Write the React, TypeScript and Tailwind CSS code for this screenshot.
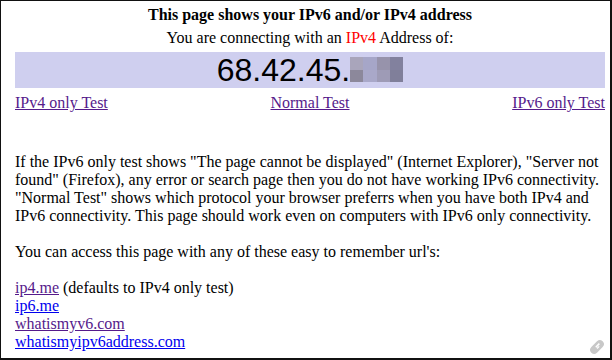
export default function App() {
  const blocks = [
    "#a9a5bb",
    "#a6a6c8",
    "#9793ab",
    "#82819e",
    "#8c889b",
    "#a9a8c9",
    "#9e9bb6",
    "#807f9a",
  ];

  return (
    <div className="relative w-[612px] h-[360px] overflow-hidden bg-white border-t border-l border-r-2 border-b-2 border-[#111] text-black font-['Liberation_Serif','Times_New_Roman',serif] text-[16px] leading-[18px]">
      <div className="pl-[14px] pr-[5px] pt-[5px]">
        <div className="text-center font-bold">This page shows your IPv6 and/or IPv4 address</div>
        <div className="mt-[5px] text-center">
          You are connecting with an <span className="text-[#ff0000]">IPv4</span> Address of:
        </div>

        <div className="mt-[5px] h-[36px] bg-[#cfcfef] flex justify-center">
          <span className="font-['Liberation_Sans',Arial,sans-serif] text-[32px] leading-[36px]">68.42.45.</span>
          <div className="mt-[5px] grid grid-cols-4 w-[53px] h-[25px]">
            {blocks.map((c, i) => (
              <div key={i} style={{ backgroundColor: c }} />
            ))}
          </div>
        </div>

        <div className="mt-[6px] flex justify-between">
          <a href="#" className="underline text-[#551a8b]">IPv4 only Test</a>
          <a href="#" className="underline text-[#551a8b]">Normal Test</a>
          <a href="#" className="underline text-[#551a8b]">IPv6 only Test</a>
        </div>

        <div className="mt-[41px]">
          If the IPv6 only test shows "The page cannot be displayed" (Internet Explorer), "Server not
          found" (Firefox), any error or search page then you do not have working IPv6 connectivity.
          "Normal Test" shows which protocol your browser preferrs when you have both IPv4 and IPv6
          connectivity. This page should work even on computers with IPv6 only connectivity.
          <br />
          <br />
          You can access this page with any of these easy to remember url's:
          <br />
          <br />
          <a href="#" className="underline text-[#551a8b]">ip4.me</a> (defaults to IPv4 only test)
          <br />
          <a href="#" className="underline text-[#0000ee]">ip6.me</a>
          <br />
          <a href="#" className="underline text-[#551a8b]">whatismyv6.com</a>
          <br />
          <a href="#" className="underline text-[#0000ee]">whatismyipv6address.com</a>
        </div>
      </div>

      <svg
        className="absolute right-[4px] bottom-[2px]"
        width="18"
        height="18"
        viewBox="0 0 18 18"
      >
        <g transform="rotate(-45 9 9)">
          <rect x="1" y="5" width="16" height="8" rx="4" fill="#c8c8c8" />
          <rect x="8" y="7.5" width="5" height="1.6" fill="#ffffff" />
          <rect x="8" y="9.5" width="3" height="1.2" fill="#ffffff" />
        </g>
      </svg>
    </div>
  );
}
